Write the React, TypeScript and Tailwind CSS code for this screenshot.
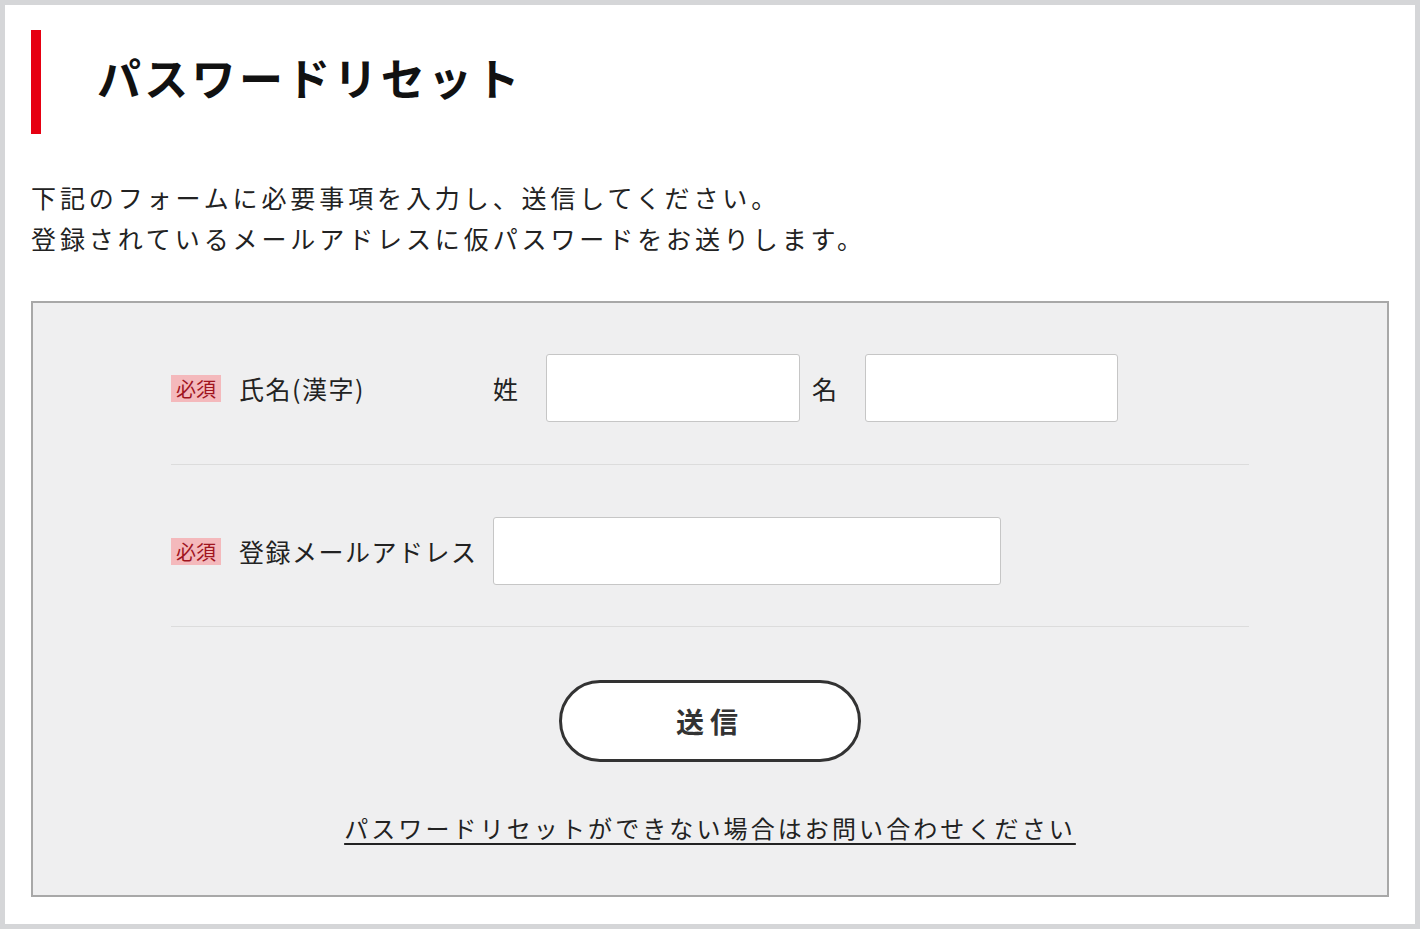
const font = { fontFamily: '"Noto Sans CJK JP", "Noto Sans", sans-serif' };

function RequiredBadge() {
  return (
    <span className="mr-[18px] inline-block shrink-0 bg-[#f4b9bc] px-[5px] text-[20px] leading-[27px] text-[#a0141e]">
      必須
    </span>
  );
}

function TextInput({ className }: { className: string }) {
  return (
    <input
      type="text"
      className={`h-[68px] shrink-0 rounded-[3px] border border-[#c6c6c6] bg-white px-3 text-[22px] outline-none ${className}`}
    />
  );
}

export default function App() {
  return (
    <div className="min-h-[929px] bg-[#d5d6d8] p-[5px]" style={font}>
      <div className="min-h-[919px] bg-white px-[26px] pt-[25px] pb-[26px]">
        <div className="flex h-[104px] items-center border-l-[10px] border-[#e60012] pl-[56px]">
          <h1 className="pb-[10px] text-[44px] font-bold leading-none tracking-[3.3px] text-[#111]">
            パスワードリセット
          </h1>
        </div>

        <p className="mt-[43px] text-[25px] leading-[41px] tracking-[3.9px] text-[#222]">
          下記のフォームに必要事項を入力し、送信してください。
          <br />
          登録されているメールアドレスに仮パスワードをお送りします。
        </p>

        <form
          className="mt-[42px] h-[596px] border-2 border-[#a8a8a8] bg-[#efeff0] px-[138px]"
          onSubmit={(e) => e.preventDefault()}
        >
          <div className="flex items-center border-b border-[#dcdcdc] pt-[51px] pb-[42px]">
            <div className="flex w-[322px] shrink-0 items-center">
              <RequiredBadge />
              <span className="text-[25px] leading-none tracking-[1.5px] text-[#222]">氏名(漢字)</span>
            </div>
            <span className="w-[53px] shrink-0 text-[25px] leading-none text-[#222]">姓</span>
            <TextInput className="w-[254px]" />
            <span className="ml-[12px] w-[53px] shrink-0 text-[25px] leading-none text-[#222]">名</span>
            <TextInput className="w-[253px]" />
          </div>

          <div className="flex items-center border-b border-[#dcdcdc] pt-[52px] pb-[41px]">
            <div className="flex w-[322px] shrink-0 items-center">
              <RequiredBadge />
              <span className="text-[25px] leading-none tracking-[1.5px] text-[#222]">登録メールアドレス</span>
            </div>
            <TextInput className="w-[508px]" />
          </div>

          <div className="flex flex-col items-center">
            <button
              type="submit"
              className="mt-[53px] h-[82px] w-[302px] rounded-full border-[3px] border-[#333] bg-white text-[28px] font-bold tracking-[6px] text-[#333]"
            >
              送信
            </button>
            <a
              href="#"
              className="mt-[48px] text-[24px] leading-[36px] tracking-[3.1px] text-[#222] underline decoration-[2px] underline-offset-[5px]"
            >
              パスワードリセットができない場合はお問い合わせください
            </a>
          </div>
        </form>
      </div>
    </div>
  );
}
